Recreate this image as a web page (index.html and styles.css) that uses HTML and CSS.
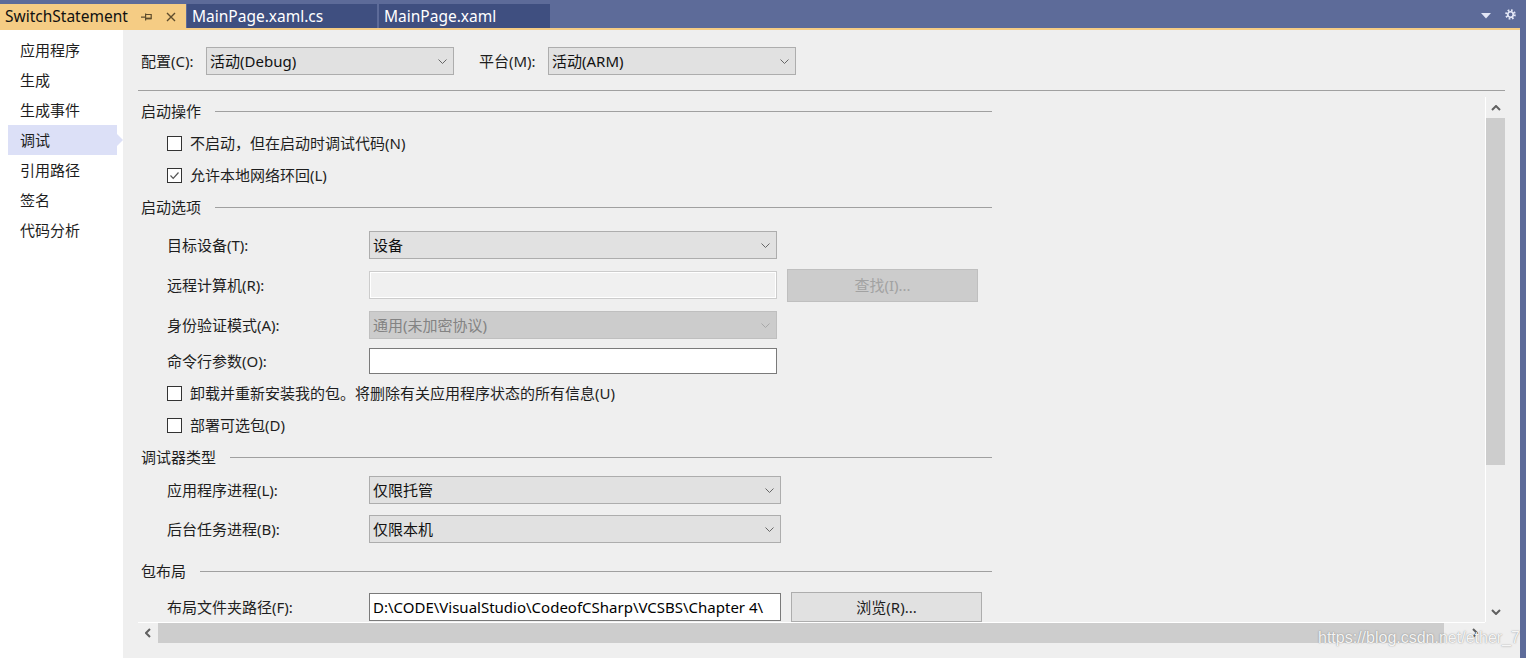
FILE: index.html
```html
<!DOCTYPE html>
<html lang="zh-CN">
<head>
<meta charset="utf-8">
<title>SwitchStatement</title>
<link rel="stylesheet" href="styles.css">
</head>
<body>
<div class="app">
  <div class="tabbar">
    <div class="tab active">
      <span class="tab-title">SwitchStatement</span>
      <svg class="pin" width="11" height="8" viewBox="0 0 11 8"><path d="M0 4.2h4.5M4.6 0.5v7M4.6 1.5H10.2V6.2M4.6 5.6H10.2" fill="none" stroke="#5e4c2c" stroke-width="1.2"/><rect x="4.6" y="4.6" width="5.6" height="1.6" fill="#5e4c2c"/></svg>
      <svg class="close" width="10" height="10" viewBox="0 0 10 10"><path d="M1 1l8 8M9 1l-8 8" fill="none" stroke="#5e4c2c" stroke-width="1.4"/></svg>
    </div>
    <div class="tab tab-cs">MainPage.xaml.cs</div>
    <div class="tab tab-xaml">MainPage.xaml</div>
    <div class="tab-tools">
      <svg class="caret" width="10" height="6" viewBox="0 0 10 6"><polygon points="0,0 10,0 5,5.5" fill="#e2e6f6"/></svg>
      <svg class="gear" width="11" height="11" viewBox="0 0 12 12"><circle cx="6" cy="6" r="4.6" fill="none" stroke="#e2e6f6" stroke-width="2.4" stroke-dasharray="1.81 1.8"/><circle cx="6" cy="6" r="3" fill="none" stroke="#e2e6f6" stroke-width="1.9"/></svg>
    </div>
  </div>
  <div class="accent"></div>
  <div class="body">
    <nav class="sidebar">
      <div class="nav-item">应用程序</div>
      <div class="nav-item">生成</div>
      <div class="nav-item">生成事件</div>
      <div class="nav-item sel">调试</div>
      <div class="nav-item">引用路径</div>
      <div class="nav-item">签名</div>
      <div class="nav-item">代码分析</div>
    </nav>
    <main class="main">
      <div class="toprow">
        <span class="top-label l1">配置(C):</span>
        <div class="combo w248"><span>活动(Debug)</span><svg class="chev" width="9" height="5" viewBox="0 0 9 5"><polyline points="0.5,0.5 4.5,4.5 8.5,0.5" fill="none" stroke="#666" stroke-width="1"/></svg></div>
        <span class="top-label l2">平台(M):</span>
        <div class="combo w248"><span>活动(ARM)</span><svg class="chev" width="9" height="5" viewBox="0 0 9 5"><polyline points="0.5,0.5 4.5,4.5 8.5,0.5" fill="none" stroke="#666" stroke-width="1"/></svg></div>
      </div>
      <div class="hr"></div>
      <div class="scroll">
        <div class="vrow">
          <div class="content">
            <div class="sec"><span>启动操作</span><div class="line"></div></div>
            <div class="cb"><span class="box"></span><span>不启动，但在启动时调试代码(N)</span></div>
            <div class="cb"><span class="box"><svg width="13" height="13" viewBox="0 0 13 13"><polyline points="2.5,6.5 5.2,9.3 10.5,3.5" fill="none" stroke="#555" stroke-width="1.2"/></svg></span><span>允许本地网络环回(L)</span></div>

            <div class="sec"><span>启动选项</span><div class="line"></div></div>
            <div class="row gap2"><span class="lbl">目标设备(T):</span>
              <div class="combo w408"><span>设备</span><svg class="chev" width="9" height="5" viewBox="0 0 9 5"><polyline points="0.5,0.5 4.5,4.5 8.5,0.5" fill="none" stroke="#666" stroke-width="1"/></svg></div>
            </div>
            <div class="row"><span class="lbl">远程计算机(R):</span>
              <div class="text disabled w408"></div>
              <div class="btn disabled tall">查找(I)...</div>
            </div>
            <div class="row"><span class="lbl">身份验证模式(A):</span>
              <div class="combo disabled w408"><span>通用(未加密协议)</span><svg class="chev" width="9" height="5" viewBox="0 0 9 5"><polyline points="0.5,0.5 4.5,4.5 8.5,0.5" fill="none" stroke="#a8a8a8" stroke-width="1"/></svg></div>
            </div>
            <div class="row h32"><span class="lbl">命令行参数(O):</span>
              <div class="text w408 short"></div>
            </div>
            <div class="cb"><span class="box"></span><span>卸载并重新安装我的包。将删除有关应用程序状态的所有信息(U)</span></div>
            <div class="cb"><span class="box"></span><span>部署可选包(D)</span></div>

            <div class="sec"><span>调试器类型</span><div class="line"></div></div>
            <div class="row h34"><span class="lbl">应用程序进程(L):</span>
              <div class="combo w412"><span>仅限托管</span><svg class="chev" width="9" height="5" viewBox="0 0 9 5"><polyline points="0.5,0.5 4.5,4.5 8.5,0.5" fill="none" stroke="#666" stroke-width="1"/></svg></div>
            </div>
            <div class="row h44"><span class="lbl">后台任务进程(B):</span>
              <div class="combo w412"><span>仅限本机</span><svg class="chev" width="9" height="5" viewBox="0 0 9 5"><polyline points="0.5,0.5 4.5,4.5 8.5,0.5" fill="none" stroke="#666" stroke-width="1"/></svg></div>
            </div>

            <div class="sec tall"><span>包布局</span><div class="line"></div></div>
            <div class="row h32"><span class="lbl">布局文件夹路径(F):</span>
              <div class="text w412 path">D:\CODE\VisualStudio\CodeofCSharp\VCSBS\Chapter 4\</div>
              <div class="btn">浏览(R)...</div>
            </div>
          </div>
          <div class="vscroll">
            <div class="sbtn up"><svg width="10" height="6" viewBox="0 0 10 6"><polyline points="1,5 5,1 9,5" fill="none" stroke="#606060" stroke-width="2"/></svg></div>
            <div class="vthumb"></div>
            <div class="vtrack"></div>
            <div class="sbtn down"><svg width="10" height="6" viewBox="0 0 10 6"><polyline points="1,1 5,5 9,1" fill="none" stroke="#606060" stroke-width="2"/></svg></div>
          </div>
        </div>
        <div class="hscroll">
          <div class="hbtn"><svg width="6" height="10" viewBox="0 0 6 10"><polyline points="5,1 1,5 5,9" fill="none" stroke="#606060" stroke-width="2"/></svg></div>
          <div class="hthumb"></div>
          <div class="htrack"></div>
          <div class="hbtn"><svg width="6" height="10" viewBox="0 0 6 10"><polyline points="1,1 5,5 1,9" fill="none" stroke="#606060" stroke-width="2"/></svg></div>
        </div>
      </div>
    </main>
    <div class="edge"></div>
  </div>
  <div class="watermark">https://blog.csdn.net/ether_7</div>
</div>
</body>
</html>
```
FILE: styles.css
```css
* { box-sizing: border-box; }
html, body { margin: 0; padding: 0; }
body {
  width: 1526px;
  height: 658px;
  overflow: hidden;
  background: #5d6b99;
  font-family: "Noto Sans", "Noto Sans CJK SC", sans-serif;
  font-size: 15px;
  line-height: 20px;
  color: #1e1e1e;
}
.app {
  position: relative;
  display: flex;
  flex-direction: column;
  width: 1526px;
  height: 658px;
}

/* tab bar */
.tabbar {
  height: 28px;
  display: flex;
  align-items: flex-end;
  background: #5d6b99;
}
.tab {
  height: 24px;
  display: flex;
  align-items: center;
  padding-left: 5px;
  background: #3f4f80;
  color: #ffffff;
  font-size: 15.5px;
  white-space: nowrap;
}
.tab.active {
  width: 186px;
  background: #f5cc84;
  color: #111;
  padding-right: 10px;
}
.tab-title { flex: 1; }
.pin { margin-right: 14px; margin-top: 1px; }
.close { margin-top: 1px; }
.tab-cs { width: 190px; margin-left: 1px; }
.tab-xaml { width: 171px; margin-left: 2px; }
.tab-tools {
  margin-left: auto;
  height: 28px;
  display: flex;
  align-items: center;
  padding-right: 10px;
}
.caret { margin-right: 14px; margin-top: 3px; }
.gear { margin-top: 1px; }
.accent {
  height: 2px;
  background: #f5cc84;
  margin-right: 6px;
}

/* body */
.body {
  flex: 1;
  display: flex;
  min-height: 0;
}
.sidebar {
  width: 123px;
  background: #ffffff;
  padding-top: 5px;
}
.nav-item {
  position: relative;
  width: 109px;
  height: 30px;
  margin-left: 8px;
  padding-left: 12px;
  line-height: 30px;
}
.nav-item.sel { background: #dce0f7; }
.nav-item.sel::after {
  content: "";
  position: absolute;
  left: 100%;
  top: 9px;
  border-left: 6px solid #dce0f7;
  border-top: 6px solid transparent;
  border-bottom: 6px solid transparent;
}
.edge {
  width: 6px;
  background: #5d6b99;
}
.main {
  width: 1397px;
  background: #efefef;
  padding: 17px 15px 15px;
  display: flex;
  flex-direction: column;
}

/* top row */
.toprow {
  display: flex;
  align-items: center;
  height: 28px;
  padding-left: 3px;
}
.top-label { white-space: nowrap; }
.top-label.l1 { width: 65px; }
.top-label.l2 { width: 69px; margin-left: 25px; }
.hr {
  height: 1px;
  background: #a0a0a0;
  margin-top: 15px;
}

/* scroll area */
.scroll {
  margin-top: 4px;
  flex: 1;
  display: flex;
  flex-direction: column;
  min-height: 0;
}
.vrow {
  flex: 1;
  display: flex;
  min-height: 0;
}
.content {
  flex: 1;
  overflow: hidden;
  padding: 0 0 0 3px;
}
.vscroll {
  width: 20px;
  margin-top: 2px;
  border-left: 1px solid #ffffff;
  display: flex;
  flex-direction: column;
}
.sbtn {
  display: flex;
  align-items: center;
  justify-content: center;
}
.sbtn.up { height: 21px; }
.sbtn.down { height: 20px; }
.vthumb { height: 347px; background: #cdcdcd; }
.vtrack { flex: 1; }
.hscroll {
  width: 1347px;
  height: 21px;
  border-top: 1px solid #ffffff;
  display: flex;
}
.hbtn {
  width: 20px;
  display: flex;
  align-items: center;
  justify-content: center;
}
.hthumb { width: 1286px; background: #cdcdcd; }
.htrack { flex: 1; }

/* form content */
.sec {
  display: flex;
  align-items: center;
  width: 851px;
  height: 32px;
  white-space: nowrap;
}
.sec.tall { height: 40px; }
.sec .line {
  flex: 1;
  height: 1px;
  background: #a0a0a0;
  margin-left: 14px;
}
.cb {
  display: flex;
  align-items: center;
  height: 32px;
  padding-left: 26px;
  white-space: nowrap;
}
.box {
  width: 15px;
  height: 15px;
  border: 1px solid #333333;
  background: #ffffff;
  margin-right: 8px;
  display: flex;
  align-items: center;
  justify-content: center;
}
.box svg { display: block; }
.row {
  display: flex;
  align-items: center;
  height: 40px;
  padding-left: 26px;
  white-space: nowrap;
}
.row.gap2 { margin-top: 2px; }
.row.h34 { height: 34px; }
.row.h44 { height: 44px; }
.row.h32 { height: 32px; }
.lbl { width: 202px; }

.combo {
  height: 28px;
  background: #e1e1e1;
  border: 1px solid #adadad;
  display: flex;
  align-items: center;
  justify-content: space-between;
  padding: 0 6px 0 3px;
  color: #111;
}
.combo.disabled {
  background: #cccccc;
  border-color: #bfbfbf;
  color: #838383;
}
.w248 { width: 248px; }
.w408 { width: 408px; }
.w412 { width: 412px; }
.text {
  height: 28px;
  background: #ffffff;
  border: 1px solid #7a7a7a;
  padding: 0 3px;
  display: flex;
  align-items: center;
  overflow: hidden;
  color: #000;
}
.text.short { height: 26px; }
.text.disabled {
  background: #f0f0f0;
  border-color: #cccccc;
  box-shadow: inset 0 0 0 1px #ffffff;
  height: 28px;
}
.text.path { height: 28px; }
.btn {
  width: 191px;
  height: 30px;
  margin-left: 10px;
  background: #e1e1e1;
  border: 1px solid #adadad;
  display: flex;
  align-items: center;
  justify-content: center;
  color: #1e1e1e;
}
.btn.disabled {
  background: #cccccc;
  border-color: #bfbfbf;
  color: #a2a2a2;
}
.btn.tall { height: 33px; }

.watermark {
  position: absolute;
  left: 1318px;
  top: 628px;
  font-family: "Liberation Sans", Arial, sans-serif;
  font-size: 16px;
  line-height: 20px;
  color: rgba(255, 255, 255, 0.92);
  text-shadow: 0 0 1px rgba(90, 90, 90, 0.55), 0 0 2px rgba(120, 120, 120, 0.35);
  white-space: nowrap;
}
```
